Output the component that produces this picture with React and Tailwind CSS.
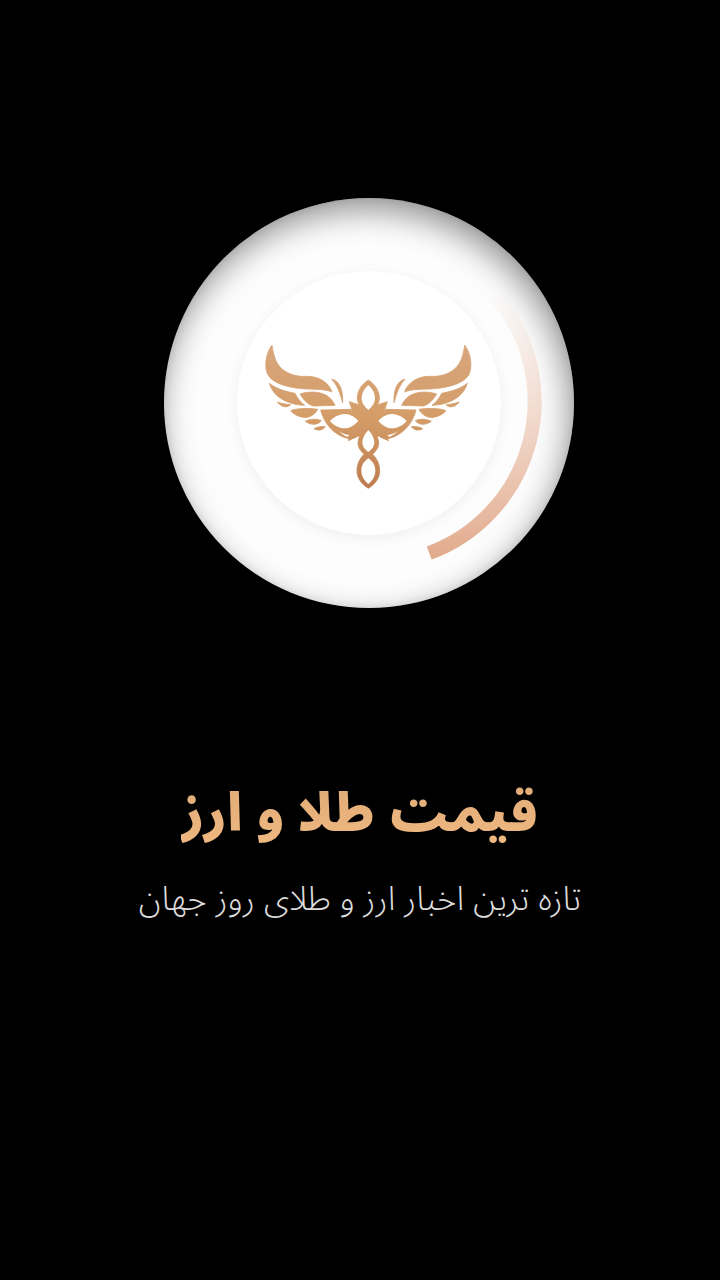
const Wing = () => (
  <>
    <path d="M66 45C46 72 42 112 54 135C72 165 130 175 170 177C200 178 228 178 246 186C238 158 205 138 170 139C130 142 90 125 76 88C71 72 67 58 66 45Z" />
    <path d="M245 148C265 150 280 175 278 218C270 190 262 165 245 148Z" />
    <path d="M58 160C80 178 110 185 135 190C142 205 152 218 164 226C120 225 70 205 58 160Z" />
    <path d="M150 192C180 182 235 180 255 226L190 228C170 222 158 205 150 192Z" />
    <path d="M82 216C95 220 110 224 122 224C115 232 98 236 82 216Z" />
    <path d="M122 242C140 234 180 234 203 238C195 255 175 265 160 262C145 260 130 252 122 242Z" />
    <path d="M166 274C180 266 200 266 214 272C205 284 185 288 166 274Z" />
    <path d="M192 296C204 290 215 289 226 290C218 300 205 304 192 296Z" />
    <path d="M212 240L304 238L318 322L296 326C250 315 222 280 212 240Z" />
  </>
);

const Holes = () => (
  <>
    <path d="M240 273C255 258 270 252 285 252C300 252 315 262 325 272C315 284 300 295 285 295C270 295 252 288 240 273Z" />
    <path d="M266 303C274 309 284 314 298 315L292 321C282 316 272 310 266 303Z" />
  </>
);

const Logo = () => (
  <svg width="240" height="170" viewBox="0 0 720 510" className="mt-[24px]">
    <defs>
      <linearGradient id="gold" gradientUnits="userSpaceOnUse" x1="0" y1="45" x2="0" y2="475">
        <stop offset="0" stopColor="#d9a67d" />
        <stop offset="0.5" stopColor="#d49d68" />
        <stop offset="1" stopColor="#bf7c50" />
      </linearGradient>
    </defs>
    <g transform="translate(3 0)">
      <g fill="url(#gold)" stroke="url(#gold)" strokeWidth="2.5">
        <Wing />
        <g transform="matrix(-1 0 0 1 710 0)">
          <Wing />
        </g>
        <path d="M298 215L326 224L355 205L384 224L412 215L402 245L430 270L402 295L415 332L385 318L355 340L325 318L295 332L308 295L280 270L308 245Z" />
        <path d="M355 150C378 165 388 185 388 205C388 225 372 238 355 250C338 238 322 225 322 205C322 185 332 165 355 150Z" />
        <path d="M355 292C372 305 386 320 386 340C386 356 372 370 355 384C338 370 324 356 324 340C324 320 338 305 355 292Z" />
        <path d="M355 362C378 378 389 400 389 422C389 445 375 462 355 475C335 462 321 445 321 422C321 400 332 378 355 362Z" />
      </g>
      <g fill="#ffffff">
        <path d="M355 165C368 176 375 190 375 205C375 220 365 232 355 240C345 232 335 220 335 205C335 190 342 176 355 165Z" />
        <path d="M355 300C366 312 373 325 373 338C373 350 363 360 355 366C347 360 337 350 337 338C337 325 344 312 355 300Z" />
        <path d="M355 385C369 395 376 407 376 422C376 438 367 452 355 462C343 452 334 438 334 422C334 407 341 395 355 385Z" />
        <Holes />
        <g transform="matrix(-1 0 0 1 710 0)">
          <Holes />
        </g>
      </g>
    </g>
  </svg>
);

const Arc = () => (
  <svg width="410" height="410" viewBox="164 198 410 410" className="absolute left-0 top-0">
    <defs>
      <linearGradient id="arcfade" gradientUnits="userSpaceOnUse" x1="0" y1="292" x2="0" y2="556">
        <stop offset="0" stopColor="#e4ae92" stopOpacity="0" />
        <stop offset="0.45" stopColor="#e4ae92" stopOpacity="0.42" />
        <stop offset="1" stopColor="#e2ab8d" stopOpacity="1" />
      </linearGradient>
    </defs>
    <path d="M494.5 295A161.5 161.5 0 0 1 429.2 553" fill="none" stroke="url(#arcfade)" strokeWidth="14" />
  </svg>
);

export default function App() {
  return (
    <div className="flex h-[1280px] w-[720px] flex-col overflow-hidden bg-black font-['Noto_Sans_Arabic',sans-serif]">
      <div className="relative ml-[164px] mt-[198px] flex h-[410px] w-[410px] items-center justify-center rounded-full bg-[#fdfdfd] shadow-[inset_-4px_12px_32px_rgba(0,0,0,0.42),inset_0_0_8px_rgba(0,0,0,0.08)]">
        <div className="flex h-[264px] w-[264px] items-center justify-center rounded-full bg-white shadow-[0_3px_14px_rgba(0,0,0,0.06)]">
          <Logo />
        </div>
        <Arc />
      </div>
      <div dir="rtl" className="mt-[165px] flex flex-col items-center">
        <h1 className="bg-gradient-to-b from-[#dfa976] to-[#f2bb83] bg-clip-text text-[52px] font-black leading-[84px] text-transparent">
          قیمت طلا و ارز
        </h1>
        <p className="mt-[19px] text-[33.5px] font-light leading-[48px] text-[#dcdcdc]">
          تازه ترین اخبار ارز و طلای روز جهان
        </p>
      </div>
    </div>
  );
}
